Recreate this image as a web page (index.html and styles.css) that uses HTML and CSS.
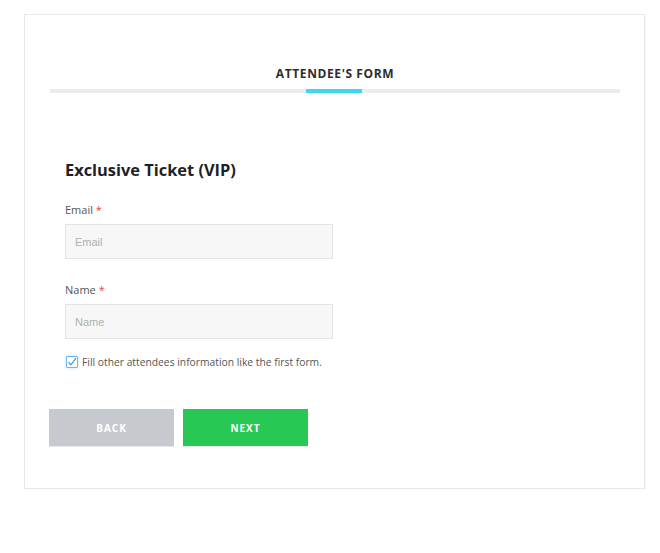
FILE: index.html
```html
<!DOCTYPE html>
<html>
<head>
<meta charset="utf-8">
<link rel="stylesheet" href="styles.css">
</head>
<body>
<div class="card">
  <div class="title">ATTENDEE'S FORM</div>
  <div class="bar"><div class="bar-active"></div></div>
  <div class="form">
    <h2 class="heading">Exclusive Ticket (VIP)</h2>
    <label class="label">Email <span class="req">*</span></label>
    <input class="input" type="text" placeholder="Email">
    <label class="label label-second">Name <span class="req">*</span></label>
    <input class="input" type="text" placeholder="Name">
    <div class="check-row">
      <span class="checkbox">
        <svg width="10" height="10" viewBox="0 0 10 10"><path d="M1.5 5.2 L4 7.8 L9 1.2" fill="none" stroke="#3b9fe6" stroke-width="1.3"/></svg>
      </span>
      <span class="check-text">Fill other attendees information like the first form.</span>
    </div>
  </div>
  <div class="buttons">
    <button class="btn btn-back">BACK</button>
    <button class="btn btn-next">NEXT</button>
  </div>
</div>
</body>
</html>
```
FILE: styles.css
```css
* { box-sizing: border-box; }
html, body { margin: 0; padding: 0; background: #fff; }
body { font-family: "Open Sans", sans-serif; }
.card {
  margin: 14px 0 0 24px;
  width: 621px;
  height: 475px;
  border: 1px solid #e8e8e8;
  box-shadow: 1px 1px 2px rgba(0, 0, 0, 0.04);
  padding: 51px 24px 0 25px;
}
.title {
  text-align: center;
  font-family: "Open Sans", sans-serif;
  font-weight: 700;
  font-size: 12px;
  letter-spacing: 0.6px;
  line-height: 16px;
  color: #2d2d33;
  padding-left: 0;
}
.bar {
  margin-top: 7px;
  height: 4px;
  background: #ececec;
  display: flex;
  justify-content: center;
}
.bar-active {
  width: 56px;
  height: 4px;
  background: #3ed6f4;
  margin-right: 2px;
}
.form {
  padding-left: 15px;
  display: flex;
  flex-direction: column;
  align-items: flex-start;
}
.heading {
  margin: 66px 0 0 0;
  font-family: "Open Sans", sans-serif;
  font-weight: 700;
  font-size: 16.4px;
  line-height: 22px;
  color: #1f1f24;
}
.label {
  margin-top: 21px;
  font-size: 11px;
  line-height: 16px;
  color: #555;
}
.label-second { margin-top: 23px; }
.req { color: #e8474f; }
.input {
  margin-top: 6px;
  width: 268px;
  height: 35px;
  background: #f7f7f7;
  border: 1px solid #e4e4e4;
  padding: 0 0 0 9px;
  font-family: "Liberation Sans", Arial, sans-serif;
  font-size: 11px;
  color: #333;
  outline: none;
}
.input::placeholder { color: #b0b0b0; }
.check-row {
  margin-top: 15px;
  display: flex;
  align-items: center;
  height: 16px;
}
.checkbox {
  margin-left: 1px;
  width: 12px;
  height: 12px;
  border: 1px solid #6ab8ef;
  border-radius: 1px;
  box-shadow: 0 0 3px rgba(80, 160, 240, 0.35);
  display: flex;
  align-items: center;
  justify-content: center;
}
.check-text {
  margin-left: 4px;
  font-size: 10.3px;
  color: #555;
}
.buttons {
  margin-top: 39px;
  margin-left: -1px;
  display: flex;
  gap: 9px;
}
.btn {
  width: 125px;
  height: 37px;
  border: none;
  color: #fff;
  font-family: "Open Sans", sans-serif;
  font-weight: 700;
  font-size: 10px;
  letter-spacing: 1px;
  padding: 0;
}
.btn-back { background: #c6cacf; box-shadow: 0 1px 0 #e6e8ea; }
.btn-next { background: #27c954; box-shadow: 0 1px 0 #e6e8ea; }
```
